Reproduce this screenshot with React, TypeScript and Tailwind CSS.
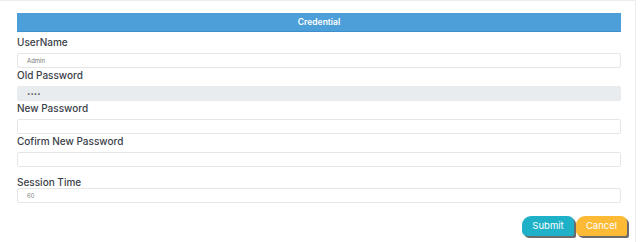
import React from "react";

const fields = [
  { label: "UserName", value: "Admin", disabled: false },
  { label: "Old Password", value: "••••", disabled: true },
  { label: "New Password", value: "", disabled: false },
  { label: "Cofirm New Password", value: "", disabled: false },
];

export default function App() {
  return (
    <div
      className="w-[642px] h-[242px] bg-white overflow-hidden"
      style={{ fontFamily: "Inter, 'Noto Sans', sans-serif" }}
    >
      <div className="w-[636px] h-[242px] border-t border-r border-[#ececec] pt-[12px] pl-[17px] pr-[14px]">
        <div className="h-[19px] bg-[#4d9fd9] border-b border-[#3f8fcf] flex items-center justify-center">
          <span className="text-[8.5px] font-semibold text-white">Credential</span>
        </div>

        <div className="flex flex-col mt-[3px]">
          {fields.map((f) => (
            <div key={f.label} className="flex flex-col">
              <label className="h-[18px] text-[10px] font-medium text-[#3b414a] leading-[14px]">
                {f.label}
              </label>
              <div
                className={
                  "h-[15px] rounded-[2px] border flex items-center pl-[9px] text-[6px] " +
                  (f.disabled
                    ? "bg-[#e9ecef] border-[#e9ecef] text-[#555]"
                    : "bg-white border-[#e6e6e6] text-[#777]")
                }
              >
                {f.value}
              </div>
            </div>
          ))}

          <label className="h-[21px] pt-[8px] text-[10px] font-medium text-[#3b414a] leading-[14px]">
            Session Time
          </label>
          <div className="h-[15px] rounded-[2px] border border-[#e6e6e6] bg-white flex items-center pl-[9px] text-[6px] text-[#888]">
            60
          </div>
        </div>

        <div className="flex justify-end gap-[2px] mt-[13px] mr-[-6px]">
          <button className="w-[52px] h-[20px] bg-[#1fb1c8] text-white text-[9.5px] rounded-tl-[9px] rounded-tr-[6px] rounded-bl-[5px] rounded-br-[2px] shadow-[2px_2px_0_#6b6b6b]">
            Submit
          </button>
          <button className="w-[51px] h-[20px] bg-[#fdbb35] text-white text-[9.5px] rounded-tl-[9px] rounded-tr-[6px] rounded-bl-[5px] rounded-br-[2px] shadow-[2px_2px_0_#6b6b6b]">
            Cancel
          </button>
        </div>
      </div>
    </div>
  );
}
